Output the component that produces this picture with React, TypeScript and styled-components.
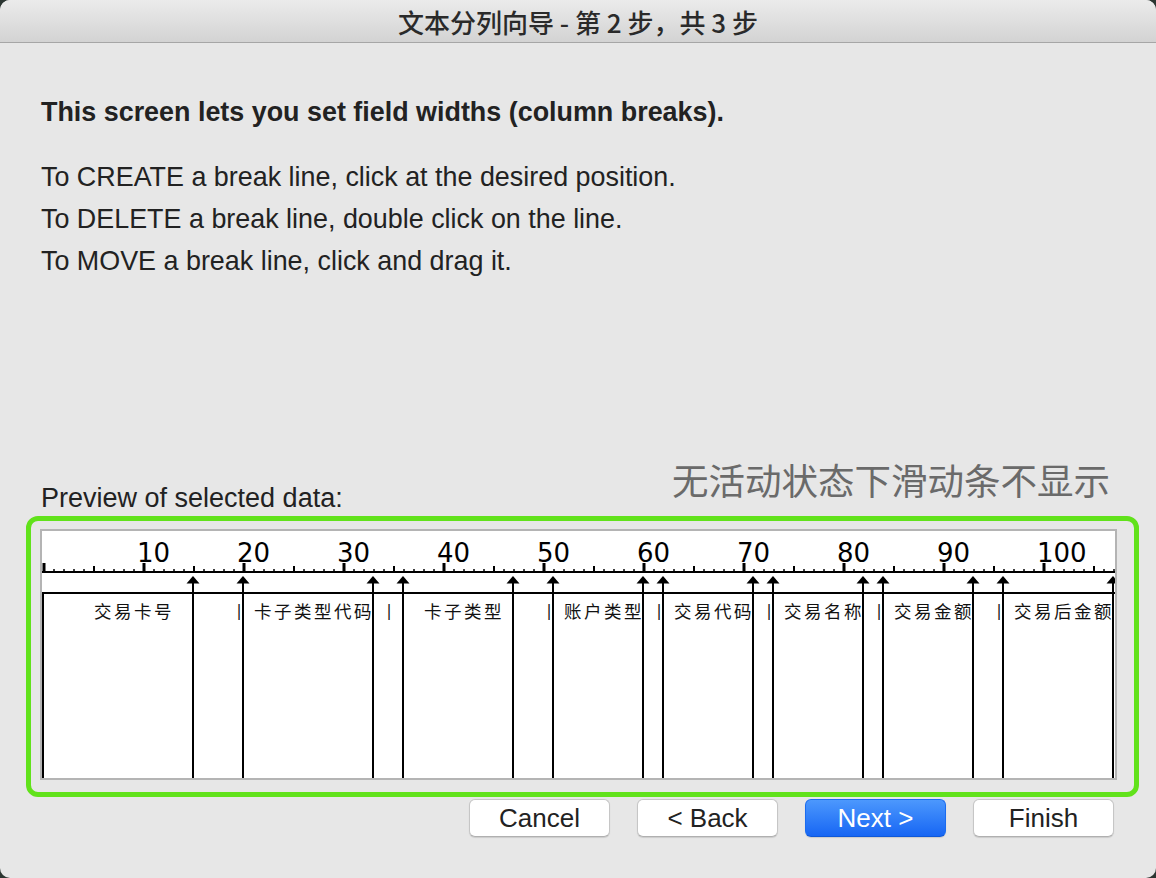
import * as React from 'react'
import styled, { createGlobalStyle } from 'styled-components'

const GlobalStyle = createGlobalStyle`
  html, body {
    margin: 0;
    padding: 0;
    background: #2c3632;
  }
  * {
    box-sizing: border-box;
  }
`

const Window = styled.div`
  width: 1156px;
  height: 878px;
  background: #e7e7e7;
  border-radius: 10px;
  overflow: hidden;
  display: flex;
  flex-direction: column;
  font-family: "Liberation Sans", "Noto Sans CJK SC", sans-serif;
  color: #222;
`

const TitleBar = styled.div`
  flex: none;
  height: 43px;
  display: flex;
  align-items: center;
  justify-content: center;
  background: linear-gradient(#ebebeb, #d3d3d3);
  border-bottom: 1px solid #a6a6a6;
  font-family: "Noto Sans CJK SC", sans-serif;
  font-size: 26px;
  font-weight: 500;
  color: #2a2a2a;
`

const Intro = styled.div`
  padding-left: 41px;
`

const Heading = styled.div`
  margin-top: 54px;
  font-size: 26.9px;
  line-height: 30px;
  font-weight: bold;
`

const Instructions = styled.div`
  margin-top: 29px;
  font-size: 26.9px;
  line-height: 42px;
`

const HintRow = styled.div`
  margin-top: 176px;
  padding: 0 46px 0 41px;
  display: flex;
  justify-content: space-between;
  align-items: flex-end;
`

const PreviewLabel = styled.div`
  font-size: 27px;
  line-height: 30px;
`

const Hint = styled.div`
  margin-bottom: 11px;
  font-family: "Noto Sans CJK SC", sans-serif;
  font-size: 36.5px;
  line-height: 44px;
  color: #6a6a6a;
`

const Frame = styled.div`
  margin: 3px 0 0 26px;
  width: 1113px;
  height: 281px;
  border: 5px solid #61e21b;
  border-radius: 12px;
  padding: 8px 0 0 9px;
`

const Preview = styled.div`
  position: relative;
  width: 1077px;
  height: 251px;
  border: 2px solid #b4b4b4;
  background: #fff;
  overflow: hidden;
`

const NumberRow = styled.div`
  height: 35px;
  padding-left: 95px;
  display: flex;
  align-items: flex-end;
`

const RulerNumber = styled.span`
  flex: none;
  width: 100px;
  font-family: "DejaVu Sans", sans-serif;
  font-size: 26px;
  line-height: 25px;
  color: #000;
`

const DataRow = styled.div`
  margin-top: 35px;
  padding-left: 2px;
  display: grid;
  grid-template-columns: repeat(108, 10px);
  font-family: "Noto Sans CJK SC", sans-serif;
  font-size: 17.5px;
  line-height: 20px;
  color: #111;
`

const Cell = styled.span<{ $sep?: boolean }>`
  white-space: nowrap;
  letter-spacing: ${p => (p.$sep ? '0' : '2.5px')};
  text-align: ${p => (p.$sep ? 'center' : 'left')};
  font-family: ${p => (p.$sep ? '"DejaVu Sans", sans-serif' : 'inherit')};
  font-size: ${p => (p.$sep ? '15px' : 'inherit')};
  color: #111;
`

const Overlay = styled.svg`
  position: absolute;
  top: 0;
  left: 0;
  pointer-events: none;
`

const ButtonRow = styled.div`
  margin-top: 2px;
  padding-right: 42px;
  display: flex;
  justify-content: flex-end;
  gap: 27px;
`

const Button = styled.button<{ $primary?: boolean }>`
  width: 141px;
  height: 38px;
  border-radius: 6px;
  border: 1px solid ${p => (p.$primary ? '#1b6cf0' : '#c6c6c6')};
  border-bottom-color: ${p => (p.$primary ? '#0f58d8' : '#b0b0b0')};
  background: ${p => (p.$primary ? 'linear-gradient(#4c98fd, #1766f4)' : '#fff')};
  color: ${p => (p.$primary ? '#fff' : '#222')};
  box-shadow: 0 1px 1px rgba(0, 0, 0, 0.12);
  font-family: "Liberation Sans", sans-serif;
  font-size: 26px;
  line-height: 36px;
  padding: 0;
`

const numbers = [10, 20, 30, 40, 50, 60, 70, 80, 90, 100]

const data: [number, string][] = [
  [5, '交易卡号'],
  [19, '|'],
  [21, '卡子类型代码'],
  [34, '|'],
  [38, '卡子类型'],
  [50, '|'],
  [52, '账户类型'],
  [61, '|'],
  [63, '交易代码'],
  [72, '|'],
  [74, '交易名称'],
  [83, '|'],
  [85, '交易金额'],
  [95, '|'],
  [97, '交易后金额'],
]

const breaks = [15, 20, 33, 36, 47, 51, 60, 62, 71, 73, 82, 84, 93, 96, 107]

const W = 1073
const H = 247

const Ruler = () => {
  const ticks = []
  for (let i = 0; i < 108; i++) {
    const c = 2 + i * 10
    if (i % 10 === 0) ticks.push(<rect key={i} x={c - 1.5} y={32} width={3} height={9} />)
    else if (i % 5 === 0) ticks.push(<rect key={i} x={c - 1} y={35} width={2} height={6} />)
    else ticks.push(<rect key={i} x={c - 0.75} y={38} width={1.5} height={3} />)
  }
  return (
    <Overlay width={W} height={H} viewBox={`0 0 ${W} ${H}`}>
      <g fill="#000">
        <rect x={0} y={40} width={W} height={2} />
        {ticks}
        <rect x={0} y={61} width={W} height={2} />
        <rect x={0} y={61} width={2} height={H} />
        {breaks.map(b => {
          const cx = 10 * b + 1
          return (
            <g key={b}>
              <rect x={cx - 1} y={46} width={2} height={H} />
              <polygon points={`${cx - 6.5},52.5 ${cx},45 ${cx + 6.5},52.5`} />
            </g>
          )
        })}
      </g>
    </Overlay>
  )
}

export default function App() {
  return (
    <Window>
      <GlobalStyle />
      <TitleBar>文本分列向导 - 第 2 步，共 3 步</TitleBar>
      <Intro>
        <Heading>This screen lets you set field widths (column breaks).</Heading>
        <Instructions>
          <div>To CREATE a break line, click at the desired position.</div>
          <div>To DELETE a break line, double click on the line.</div>
          <div>To MOVE a break line, click and drag it.</div>
        </Instructions>
      </Intro>
      <HintRow>
        <PreviewLabel>Preview of selected data:</PreviewLabel>
        <Hint>无活动状态下滑动条不显示</Hint>
      </HintRow>
      <Frame>
        <Preview>
          <NumberRow>
            {numbers.map(n => (
              <RulerNumber key={n}>{n}</RulerNumber>
            ))}
          </NumberRow>
          <DataRow>
            {data.map(([col, text]) => {
              const sep = text === '|'
              const span = sep ? 1 : text.length * 2
              return (
                <Cell key={col} $sep={sep} style={{ gridColumn: `${col + 1} / span ${span}` }}>
                  {text}
                </Cell>
              )
            })}
          </DataRow>
          <Ruler />
        </Preview>
      </Frame>
      <ButtonRow>
        <Button>Cancel</Button>
        <Button>&lt; Back</Button>
        <Button $primary>Next &gt;</Button>
        <Button>Finish</Button>
      </ButtonRow>
    </Window>
  )
}
